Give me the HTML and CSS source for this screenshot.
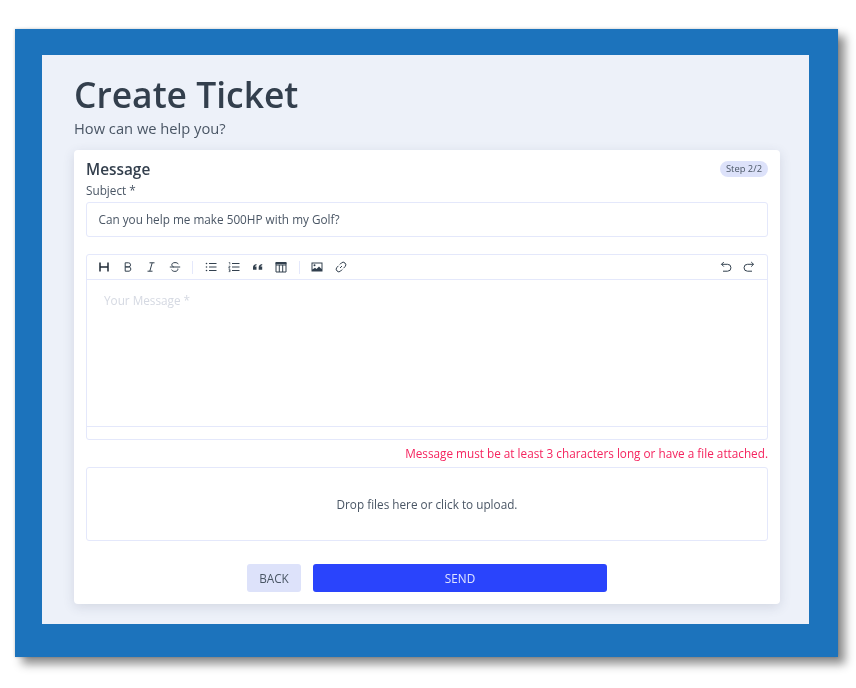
FILE: index.html
```html
<!DOCTYPE html>
<html lang="en">
<head>
<meta charset="utf-8">
<title>Create Ticket</title>
<link rel="stylesheet" href="styles.css">
</head>
<body>
<div class="frame">
  <main class="page">
    <h1 class="title">Create Ticket</h1>
    <p class="subtitle">How can we help you?</p>
    <section class="card">
      <div class="card-head">
        <h2 class="card-title">Message</h2>
        <span class="badge">Step 2/2</span>
      </div>
      <label class="label">Subject *</label>
      <div class="input">Can you help me make 500HP with my Golf?</div>
      <div class="editor">
        <div class="toolbar">
          <svg class="ic" viewBox="0 0 12 12"><path class="s2" d="M2 1.500v9M10 1.500v9M2 6h8"/></svg>
          <svg class="ic" viewBox="0 0 12 12"><path class="s" d="M3.200 1.800h3.300a2 2 0 0 1 0 4.100H3.200zM3.200 5.900h3.900a2.200 2.200 0 0 1 0 4.300H3.200z"/></svg>
          <svg class="ic" viewBox="0 0 12 12"><path class="s" d="M4.500 1.800h5M2.500 10.200h5M7.200 1.800 4.800 10.200"/></svg>
          <svg class="ic" viewBox="0 0 12 12"><path class="s" d="M9.300 3.200C8.800 2 7.500 1.600 6 1.600c-1.800 0-3.200.8-3.200 2.200 0 1 .7 1.700 2 2.200M.8 6h10.400M8.800 7.600c.4 1.600-.9 2.800-2.900 2.800-1.600 0-2.800-.6-3.300-1.800"/></svg>
          <span class="sep"></span>
          <svg class="ic" viewBox="0 0 12 12"><path class="s" d="M4 2.500h7.500M4 6h7.500M4 9.500h7.500"/><circle cx="1.500" cy="2.500" r=".8"/><circle cx="1.500" cy="6" r=".8"/><circle cx="1.500" cy="9.500" r=".8"/></svg>
          <svg class="ic" viewBox="0 0 12 12"><path class="s" d="M4 2.500h7.500M4 6h7.500M4 9.500h7.500"/><path class="s3" d="M.8 1.500h1v2M.7 5.200h1.300v1H.8v1h1.300M.7 8.600h1.400v2H.7M1 9.600h1"/></svg>
          <svg class="ic" viewBox="0 0 12 12"><path d="M1 6.500C1 4.700 2 3.400 4.500 3v1.200c-1 .2-1.500.6-1.600 1.300h1.600v3.300H1zM6.700 6.500c0-1.800 1-3.100 3.500-3.500v1.200c-1 .2-1.500.6-1.600 1.300h1.600v3.300H6.700z"/></svg>
          <svg class="ic" viewBox="0 0 12 12"><path d="M.6 1.200h10.800v2H.6z"/><path class="s" d="M1 1.500h10v9.500H1zM1 4h10M4.300 4v7M7.700 4v7"/></svg>
          <span class="sep"></span>
          <svg class="ic" viewBox="0 0 12 12"><path d="M.5 1.500h11v9H.5z"/><path fill="#fff" d="M1.500 2.500h9v5.500L8 5.500 5.500 8 4 6.700 1.500 8.500z"/><circle cx="3.500" cy="4.300" r="1"/></svg>
          <svg class="ic" viewBox="0 0 12 12"><path class="s" d="M5 7 7 5M4.800 3.500l1.500-1.500a2.500 2.500 0 0 1 3.700 3.700L8.500 7.200M7.200 8.500 5.700 10A2.500 2.500 0 0 1 2 6.300l1.500-1.500"/></svg>
          <span class="spacer"></span>
          <svg class="ic" viewBox="0 0 12 12"><path class="s" d="M3.800 1 1.500 3.300l2.300 2.300M1.500 3.300h6a3.400 3.400 0 0 1 0 6.900H3"/></svg>
          <svg class="ic" viewBox="0 0 12 12"><path class="s" d="M8.200 1l2.300 2.300-2.300 2.300M10.500 3.300h-6a3.400 3.400 0 0 0 0 6.900H9"/></svg>
        </div>
        <div class="editor-body">Your Message *</div>
        <div class="editor-foot"></div>
      </div>
      <p class="error">Message must be at least 3 characters long or have a file attached.</p>
      <div class="drop">Drop files here or click to upload.</div>
      <div class="actions">
        <button class="btn btn-back" type="button">BACK</button>
        <button class="btn btn-send" type="button">SEND</button>
      </div>
    </section>
  </main>
</div>
</body>
</html>
```
FILE: styles.css
```css
* { box-sizing: border-box; }
html, body { margin: 0; padding: 0; background: #fff; }
body { font-family: "Open Sans", sans-serif; color: #333f4d; width: 856px; height: 688px; overflow: hidden; padding: 29px 18px 0 15px; }
.frame { height: 628px; background: #1c73bc; padding: 26px 29px 33px 27px; box-shadow: 7px 7px 9px rgba(0,0,0,.45), 0 0 3px rgba(0,0,0,.2); filter: blur(.35px); }
.page { height: 569px; background: #edf1f9; padding: 19px 29px 20px 32px; }
.title { margin: 0; font-size: 35.400px; line-height: 40px; font-weight: 600; color: #333f4d; }
.subtitle { margin: 4px 0 0; font-size: 14.700px; line-height: 20px; color: #4a5665; }
.card { margin-top: 12px; height: 454px; background: #fff; border-radius: 4px; padding: 8px 12px 0; box-shadow: 0 3px 12px rgba(50,60,90,.14); }
.card-head { display: flex; justify-content: space-between; align-items: center; height: 23px; }
.card-title { margin: 0; font-size: 15.360px; line-height: 22px; font-weight: 600; color: #333f4d; }
.badge { font-size: 9.400px; line-height: 16px; height: 16px; padding: 0 6px; border-radius: 8px; background: #dde2fa; color: #4a5665; margin-top: -2px; }
.label { display: block; font-size: 11.760px; line-height: 18px; color: #4a5665; }
.input { height: 35px; margin-top: 3px; border: 1px solid #e4e8fb; border-radius: 3px; padding: 0 11.500px; font-size: 11.760px; line-height: 33px; color: #4a5665; background: #fff; }
.editor { margin-top: 17px; border: 1px solid #e4e8fb; border-radius: 3px; height: 186px; display: flex; flex-direction: column; }
.toolbar { height: 25px; flex: none; display: flex; align-items: center; padding: 0 12px 0 11px; gap: 11.500px; border-bottom: 1px solid #e4e8fb; }
.ic { width: 12px; height: 12px; flex: none; fill: #32404e; }
.s { fill: none; stroke: #32404e; stroke-width: 1; }
.s2 { fill: none; stroke: #1f2a36; stroke-width: 1.500; }
.s3 { fill: none; stroke: #32404e; stroke-width: .7; }
.sep { width: 1px; height: 13px; background: #e4e8fb; }
.spacer { flex: 1; }
.editor-body { flex: 1; padding: 10px 17px; font-size: 11.760px; line-height: 20px; color: #d5d9e2; }
.editor-foot { height: 13px; flex: none; border-top: 1px solid #e4e8fb; }
.error { margin: 5px 0 0; text-align: right; font-size: 11.760px; line-height: 17px; color: #f5245f; }
.drop { margin-top: 5px; height: 74px; border: 1px solid #e4e8fb; border-radius: 3px; display: flex; align-items: center; justify-content: center; font-size: 11.760px; color: #4a5665; }
.actions { display: flex; justify-content: center; gap: 12px; margin-top: 23px; }
.btn { height: 28px; border: 0; border-radius: 3px; font-family: inherit; font-size: 11.760px; padding: 0; }
.btn-back { width: 54px; background: #dde2fa; color: #4a5665; }
.btn-send { width: 294px; background: #2a44fc; color: #dfe4ff; }
```
